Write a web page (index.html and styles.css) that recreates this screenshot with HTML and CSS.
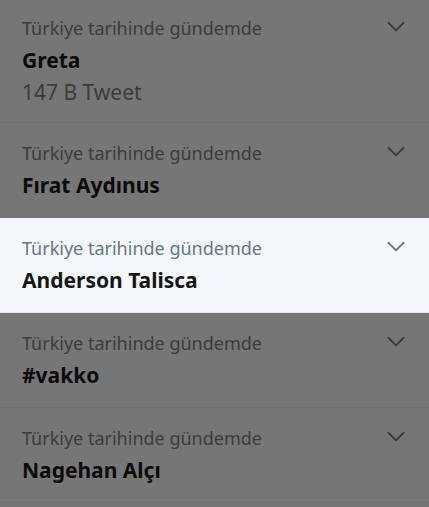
FILE: index.html
```html
<!DOCTYPE html>
<html lang="tr">
<head>
  <meta charset="UTF-8">
  <title>Gündem</title>
  <link rel="stylesheet" href="styles.css">
</head>
<body>
  <div class="trends">
    <div class="trend first">
      <div class="trend-head">
        <span class="context">Türkiye tarihinde gündemde</span>
        <svg class="chevron" viewBox="0 0 24 24"><path d="M20.207 8.147c-.39-.39-1.023-.39-1.414 0L12 14.94 5.207 8.147c-.39-.39-1.023-.39-1.414 0-.39.39-.39 1.023 0 1.414l7.5 7.5c.195.196.45.294.707.294s.512-.098.707-.293l7.5-7.5c.39-.39.39-1.022 0-1.413z"/></svg>
      </div>
      <div class="name">Greta</div>
      <div class="count">147 B Tweet</div>
    </div>

    <div class="trend">
      <div class="trend-head">
        <span class="context">Türkiye tarihinde gündemde</span>
        <svg class="chevron" viewBox="0 0 24 24"><path d="M20.207 8.147c-.39-.39-1.023-.39-1.414 0L12 14.94 5.207 8.147c-.39-.39-1.023-.39-1.414 0-.39.39-.39 1.023 0 1.414l7.5 7.5c.195.196.45.294.707.294s.512-.098.707-.293l7.5-7.5c.39-.39.39-1.022 0-1.413z"/></svg>
      </div>
      <div class="name">Fırat Aydınus</div>
    </div>

    <div class="trend active">
      <div class="trend-head">
        <span class="context">Türkiye tarihinde gündemde</span>
        <svg class="chevron" viewBox="0 0 24 24"><path d="M20.207 8.147c-.39-.39-1.023-.39-1.414 0L12 14.94 5.207 8.147c-.39-.39-1.023-.39-1.414 0-.39.39-.39 1.023 0 1.414l7.5 7.5c.195.196.45.294.707.294s.512-.098.707-.293l7.5-7.5c.39-.39.39-1.022 0-1.413z"/></svg>
      </div>
      <div class="name">Anderson Talisca</div>
    </div>

    <div class="trend">
      <div class="trend-head">
        <span class="context">Türkiye tarihinde gündemde</span>
        <svg class="chevron" viewBox="0 0 24 24"><path d="M20.207 8.147c-.39-.39-1.023-.39-1.414 0L12 14.94 5.207 8.147c-.39-.39-1.023-.39-1.414 0-.39.39-.39 1.023 0 1.414l7.5 7.5c.195.196.45.294.707.294s.512-.098.707-.293l7.5-7.5c.39-.39.39-1.022 0-1.413z"/></svg>
      </div>
      <div class="name">#vakko</div>
    </div>

    <div class="trend">
      <div class="trend-head">
        <span class="context">Türkiye tarihinde gündemde</span>
        <svg class="chevron" viewBox="0 0 24 24"><path d="M20.207 8.147c-.39-.39-1.023-.39-1.414 0L12 14.94 5.207 8.147c-.39-.39-1.023-.39-1.414 0-.39.39-.39 1.023 0 1.414l7.5 7.5c.195.196.45.294.707.294s.512-.098.707-.293l7.5-7.5c.39-.39.39-1.022 0-1.413z"/></svg>
      </div>
      <div class="name">Nagehan Alçı</div>
    </div>
  </div>
</body>
</html>
```

FILE: styles.css
```css
body {
  margin: 0;
  background-color: #767676;
  font-family: 'Noto Sans', 'Open Sans', sans-serif;
  overflow: hidden;
}

.trends {
  margin-top: -2px;
}

.trend {
  height: 95px;
  padding: 14px 22px 0 22px;
  box-sizing: border-box;
  border-bottom: 1px solid #6e6e6e;
  background-color: #767676;
  color: #0b0b0b;
}

.trend.first {
  height: 125px;
}

.trend-head {
  display: flex;
  justify-content: space-between;
  align-items: flex-start;
  height: 32px;
}

.context {
  font-size: 18px;
  line-height: 32px;
  color: #3c3c3c;
}

.chevron {
  width: 24px;
  height: 24px;
  margin-top: 2px;
  margin-right: -1px;
  fill: #3a3a3a;
}

.name {
  font-size: 21px;
  font-weight: bold;
  line-height: 32px;
}

.count {
  font-size: 21px;
  line-height: 32px;
  color: #3c3c3c;
}

.active {
  background-color: #f5f8fa;
  border-bottom-color: #e6ecf0;
  color: #14171a;
}

.active .context {
  color: #657786;
}

.active .chevron {
  fill: #657786;
}
```
